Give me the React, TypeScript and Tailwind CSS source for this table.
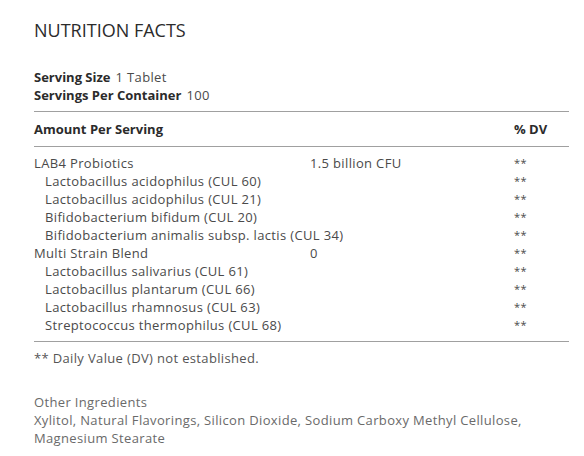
const rows = [
  { name: 'LAB4 Probiotics', amount: '1.5 billion CFU', sub: false },
  { name: 'Lactobacillus acidophilus (CUL 60)', amount: '', sub: true },
  { name: 'Lactobacillus acidophilus (CUL 21)', amount: '', sub: true },
  { name: 'Bifidobacterium bifidum (CUL 20)', amount: '', sub: true },
  { name: 'Bifidobacterium animalis subsp. lactis (CUL 34)', amount: '', sub: true },
  { name: 'Multi Strain Blend', amount: '0', sub: false },
  { name: 'Lactobacillus salivarius (CUL 61)', amount: '', sub: true },
  { name: 'Lactobacillus plantarum (CUL 66)', amount: '', sub: true },
  { name: 'Lactobacillus rhamnosus (CUL 63)', amount: '', sub: true },
  { name: 'Streptococcus thermophilus (CUL 68)', amount: '', sub: true },
];

export default function App() {
  return (
    <div className="min-h-[456px] w-[584px] bg-white pl-[34px] pr-[15px] pt-[18px] font-['Open_Sans',sans-serif] text-[13px] leading-[18px] tracking-[0.35px] text-[#4a4a4a]">
      <h1 className="text-[18px] font-normal leading-[24px] tracking-normal text-[#2b2b2b]">NUTRITION FACTS</h1>

      <div className="mt-[26px] pb-[7px]">
        <div>
          <span className="font-bold tracking-normal text-[#2b2b2b]">Serving Size</span>
          <span className="ml-[5px]">1 Tablet</span>
        </div>
        <div>
          <span className="font-bold tracking-normal text-[#2b2b2b]">Servings Per Container</span>
          <span className="ml-[5px]">100</span>
        </div>
      </div>

      <div className="grid grid-cols-[276px_204px_1fr] border-y border-[#a0a0a0] py-[8px] font-bold tracking-normal text-[#2b2b2b]">
        <span>Amount Per Serving</span>
        <span />
        <span>% DV</span>
      </div>

      <div className="border-b border-[#a0a0a0] pb-[7px] pt-[7px]">
        {rows.map((r, i) => (
          <div key={i} className="grid grid-cols-[276px_204px_1fr]">
            <span className={`whitespace-nowrap ${r.sub ? 'pl-[11px]' : ''}`}>{r.name}</span>
            <span>{r.amount}</span>
            <span className="text-[11px]">**</span>
          </div>
        ))}
      </div>

      <p className="mt-[7px] text-[#555]">** Daily Value (DV) not established.</p>

      <div className="mt-[26px] text-[#6a6a6a]">
        <p>Other Ingredients</p>
        <p>Xylitol, Natural Flavorings, Silicon Dioxide, Sodium Carboxy Methyl Cellulose, Magnesium Stearate</p>
      </div>
    </div>
  );
}
